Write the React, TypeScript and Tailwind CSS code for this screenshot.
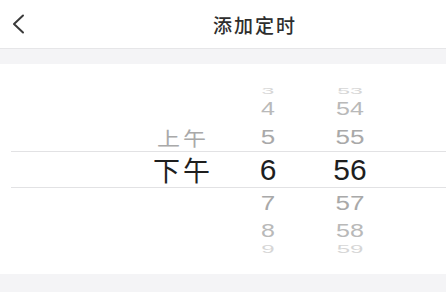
const latin = "font-['Liberation_Sans','Noto_Sans_CJK_SC',sans-serif]";
const cjk = "font-['Noto_Sans_CJK_SC',sans-serif]";

type Cell = { text: string; size: string; color: string; scale: string };

function Row({
  h,
  lead,
  ampm,
  hour,
  minute,
  extra = "",
}: {
  h: string;
  lead: string;
  ampm?: Cell;
  hour?: Cell;
  minute?: Cell;
  extra?: string;
}) {
  const cell = (c: Cell | undefined, w: string, font: string) => (
    <div className={`${w} flex justify-center`}>
      {c && (
        <span className={`${font} ${c.size} ${c.color} ${c.scale} leading-none inline-block`}>
          {c.text}
        </span>
      )}
    </div>
  );
  return (
    <div className={`${h} flex items-center ${extra}`}>
      <div className={lead} />
      {cell(ampm, "w-[80px]", cjk)}
      {cell(hour, "w-[90px]", latin)}
      {cell(minute, "w-[74px]", latin)}
    </div>
  );
}

export default function App() {
  const faint = "text-[#d6d6d6]";
  const mid = "text-[#b9b9b9]";
  const near = "text-[#a9a9a9]";
  return (
    <div className="w-[446px] h-[292px] bg-[#f4f4f6] overflow-hidden">
      <header className="h-[49px] bg-white border-b border-[#e6e6e8] flex items-center">
        <svg className="ml-[11px]" width="14" height="20" viewBox="0 0 14 20" fill="none">
          <path d="M12 1.5 L3 10 L12 18.5" stroke="#3a3a3a" strokeWidth="2" strokeLinecap="round" strokeLinejoin="round" />
        </svg>
        <h1 className={`${cjk} ml-[188px] text-[19px] tracking-[2px] font-medium text-[#2e2e2e] leading-none`}>
          添加定时
        </h1>
      </header>
      <div className="h-[15px]" />
      <section className="bg-white h-[210px] flex flex-col">
        <div className="h-[87px] flex flex-col">
          <div className="h-[18px]" />
          <Row
            h="h-[17px]"
            lead="w-[143px]"
            hour={{ text: "3", size: "text-[23px]", color: faint, scale: "scale-y-[0.42]" }}
            minute={{ text: "53", size: "text-[23px]", color: faint, scale: "scale-y-[0.42]" }}
          />
          <Row
            h="h-[21px]"
            lead="w-[143px]"
            hour={{ text: "4", size: "text-[25px]", color: mid, scale: "scale-y-[0.7]" }}
            minute={{ text: "54", size: "text-[25px]", color: mid, scale: "scale-y-[0.7]" }}
          />
          <Row
            h="h-[31px]"
            lead="w-[143px]"
            extra="pt-[3px]"
            ampm={{ text: "上午", size: "text-[23px] tracking-[3px]", color: near, scale: "scale-y-[0.85]" }}
            hour={{ text: "5", size: "text-[26px]", color: near, scale: "scale-y-[0.78]" }}
            minute={{ text: "55", size: "text-[26px]", color: near, scale: "scale-y-[0.78]" }}
          />
        </div>
        <Row
          h="h-[37px]"
          lead="w-[132px]"
          extra="ml-[11px] border-y border-[#e2e2e4]"
          ampm={{ text: "下午", size: "text-[27px] tracking-[3px]", color: "text-[#1e1e1e]", scale: "" }}
          hour={{ text: "6", size: "text-[30px]", color: "text-[#1e1e1e]", scale: "" }}
          minute={{ text: "56", size: "text-[30px]", color: "text-[#1e1e1e]", scale: "" }}
        />
        <div className="h-[86px] flex flex-col">
          <Row
            h="h-[29px]"
            lead="w-[143px]"
            hour={{ text: "7", size: "text-[26px]", color: near, scale: "scale-y-[0.78]" }}
            minute={{ text: "57", size: "text-[26px]", color: near, scale: "scale-y-[0.78]" }}
          />
          <Row
            h="h-[26px]"
            lead="w-[143px]"
            hour={{ text: "8", size: "text-[25px]", color: mid, scale: "scale-y-[0.75]" }}
            minute={{ text: "58", size: "text-[25px]", color: mid, scale: "scale-y-[0.75]" }}
          />
          <Row
            h="h-[12px]"
            lead="w-[143px]"
            hour={{ text: "9", size: "text-[24px]", color: faint, scale: "scale-y-[0.45]" }}
            minute={{ text: "59", size: "text-[24px]", color: faint, scale: "scale-y-[0.45]" }}
          />
        </div>
      </section>
    </div>
  );
}
